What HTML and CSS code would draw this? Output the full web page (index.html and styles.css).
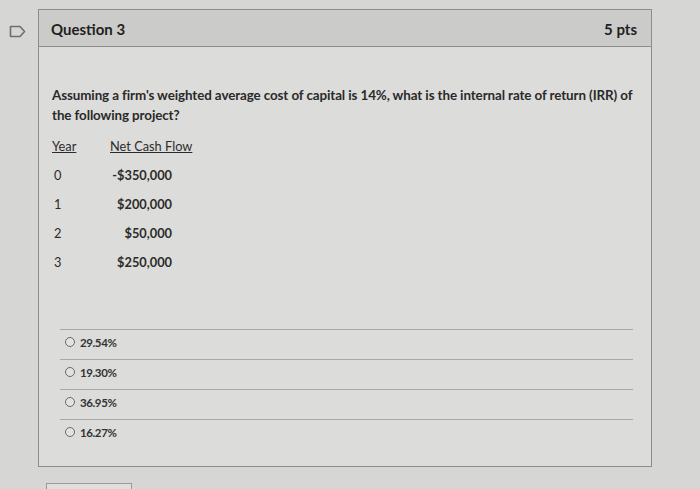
FILE: index.html
```html
<!DOCTYPE html>
<html>
<head>
<meta charset="utf-8">
<link rel="stylesheet" href="styles.css">
</head>
<body>
<div class="page">
  <div class="side">
    <svg class="flag" width="17" height="13" viewBox="0 0 17 13"><path d="M1.5 1.5 H11 L15.5 6.5 L11 11.5 H1.5 Z" fill="none" stroke="#6f6f6f" stroke-width="1.6" stroke-linejoin="round"/></svg>
  </div>
  <div class="main">
    <div class="card">
      <div class="card-head">
        <span class="q-title">Question 3</span>
        <span class="pts">5 pts</span>
      </div>
      <div class="card-body">
        <p class="q-text">Assuming a firm's weighted average cost of capital is 14%, what is the internal rate of return (IRR) of the following project?</p>
        <div class="cf">
          <div class="cf-row cf-head"><span class="c-year">Year</span><span class="c-val">Net Cash Flow</span></div>
          <div class="cf-row"><span class="c-year num">0</span><span class="c-val num">-$350,000</span></div>
          <div class="cf-row"><span class="c-year num">1</span><span class="c-val num">$200,000</span></div>
          <div class="cf-row"><span class="c-year num">2</span><span class="c-val num">$50,000</span></div>
          <div class="cf-row"><span class="c-year num">3</span><span class="c-val num">$250,000</span></div>
        </div>
        <ul class="answers">
          <li><span class="radio"></span>29.54%</li>
          <li><span class="radio"></span>19.30%</li>
          <li><span class="radio"></span>36.95%</li>
          <li><span class="radio"></span>16.27%</li>
        </ul>
      </div>
    </div>
    <div class="btn"></div>
  </div>
</div>
</body>
</html>
```
FILE: styles.css
```css
* { box-sizing: border-box; }
html, body { margin: 0; padding: 0; }
body {
  width: 700px;
  height: 489px;
  overflow: hidden;
  background: #d6d6d4;
  font-family: Lato, "Liberation Sans", sans-serif;
  color: #262626;
}
.page {
  display: flex;
  padding-top: 9px;
}
.side {
  width: 38px;
  padding: 16px 0 0 9px;
}
.flag { display: block; }
.main {
  width: 614px;
}
.card {
  border: 1px solid #8d8d8b;
  background: #dcdcda;
}
.card-head {
  height: 37px;
  background: #cbcbc9;
  border-bottom: 1px solid #8d8d8b;
  display: flex;
  justify-content: space-between;
  align-items: center;
  padding: 2px 14px 0 12px;
  font-weight: 700;
  font-size: 15px;
  color: #1f1f1f;
}
.card-body {
  padding: 38px 18px 17px 13px;
}
.q-text {
  margin: 0;
  width: 590px;
  font-size: 13.4px;
  line-height: 20px;
  font-weight: 700;
  color: #2a2a2a;
  letter-spacing: -0.1px;
}
.cf {
  margin-top: 6px;
  font-size: 12.8px;
  color: #2c2c2c;
}
.cf-row {
  display: flex;
  height: 29px;
  align-items: center;
}
.cf-head span { text-decoration: underline; white-space: nowrap; }
.c-year { width: 58px; }
.c-year.num { padding-left: 2px; }
.c-val { width: 62px; }
.c-val.num { text-align: right; font-weight: 700; }
.cf-head .c-val { text-align: left; }
.answers {
  list-style: none;
  margin: 53px 0 0 8px;
  padding: 0;
}
.answers li {
  border-top: 1px solid #a9a9a7;
  height: 30px;
  display: flex;
  align-items: center;
  padding: 0 0 5px 5px;
  font-size: 11.5px;
  font-weight: 700;
  color: #333;
  letter-spacing: -0.4px;
}
.radio {
  width: 10px;
  height: 10px;
  border: 1.3px solid #6a6a6a;
  border-radius: 50%;
  margin-right: 5px;
  background: #e2e2e0;
}
.btn {
  margin: 16px 0 0 8px;
  width: 86px;
  height: 20px;
  border: 1px solid #9a9a98;
  background: #dededc;
}
```
